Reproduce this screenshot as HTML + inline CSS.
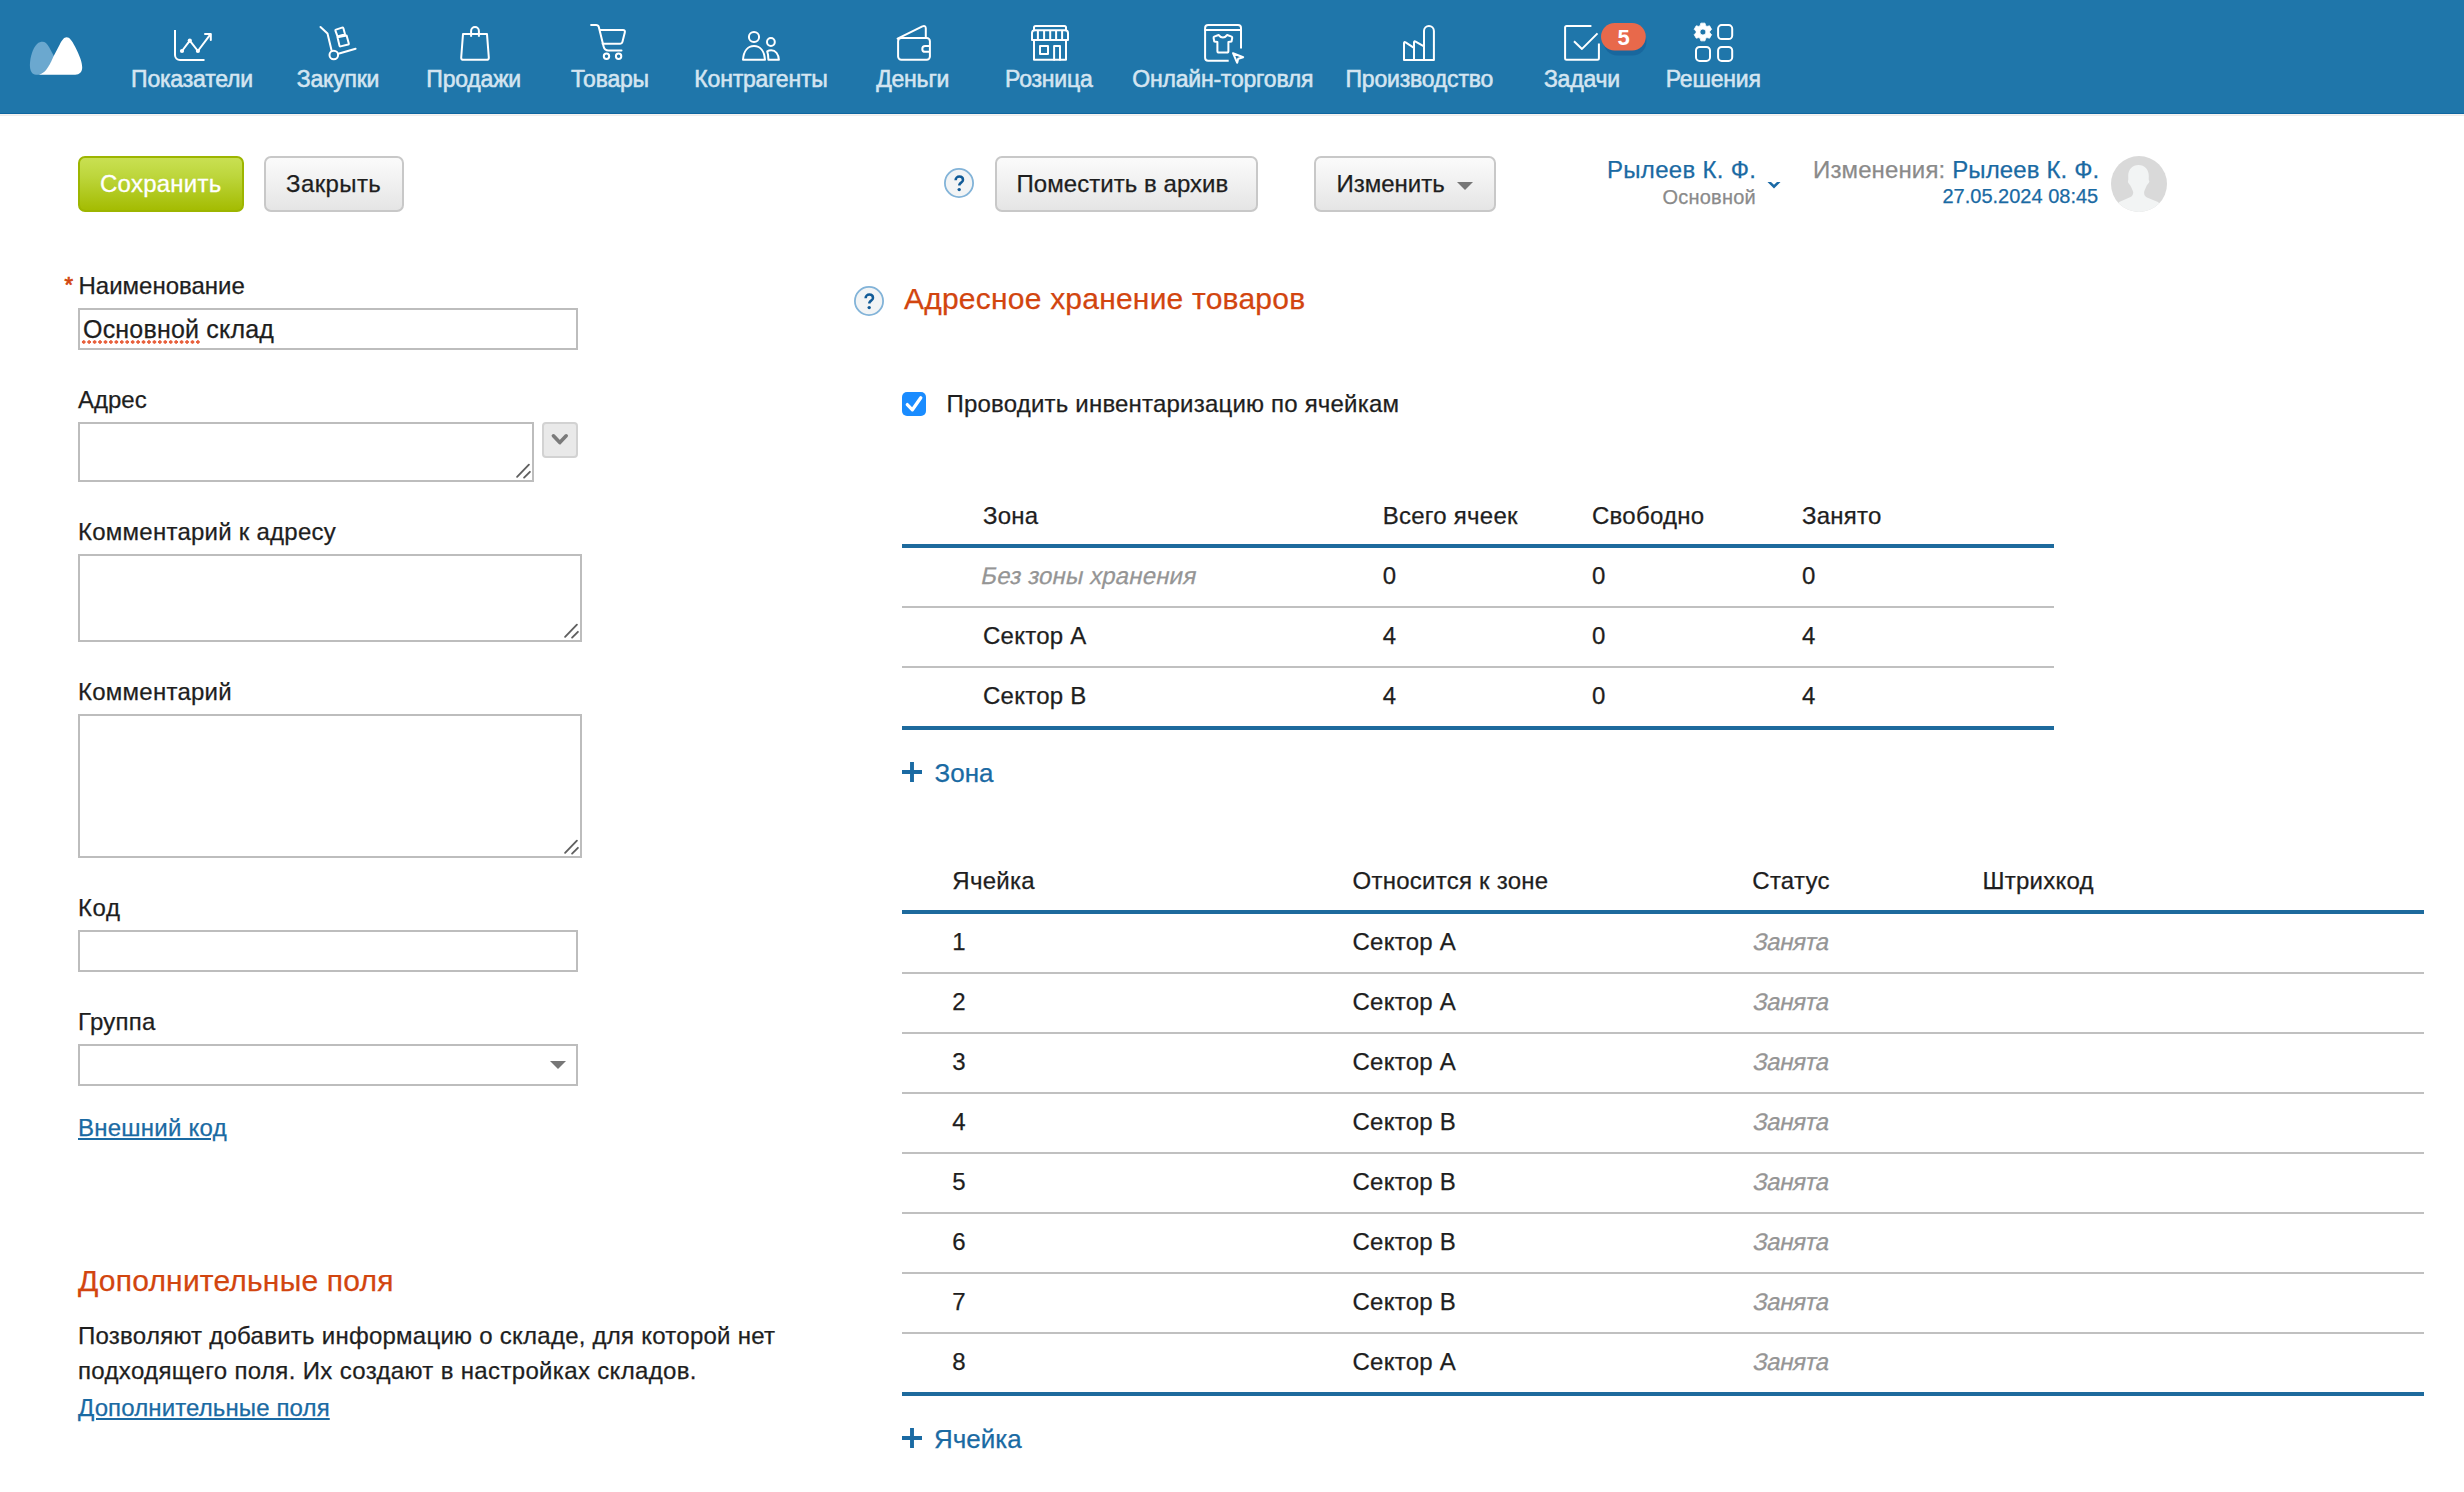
<!DOCTYPE html>
<html><head><meta charset="utf-8">
<style>
*{box-sizing:border-box;margin:0;padding:0}
html,body{width:2464px;height:1492px;overflow:hidden;background:#fff}
body{font-family:"Liberation Sans",sans-serif;color:#1e1e1e;position:relative}
.t{position:absolute;white-space:nowrap;line-height:1;-webkit-text-stroke:0.25px currentColor}
.hdr{position:absolute;left:0;top:0;width:2464px;height:114px;background:#1f76aa;border-bottom:1px solid #0e66a0}
.hdrsh{position:absolute;left:0;top:114px;width:2464px;height:1px;background:#f7f3f0}
.hdrsh2{position:absolute;left:0;top:115px;width:2464px;height:1px;background:#ededed}
.nav{position:absolute;font-size:23px;letter-spacing:-0.2px;color:#d4e5f1;text-align:center;width:240px;line-height:1;white-space:nowrap;-webkit-text-stroke:0.55px #d4e5f1}
.ico{position:absolute;top:0;left:0}
.btn{position:absolute;top:156px;height:56px;border:2px solid #c8c8c8;border-radius:7px;background:linear-gradient(#fbfbfb,#e5e5e5)}
.inp{position:absolute;border:2px solid #bdbdbd;background:#fff}
.grip{position:absolute;right:0;bottom:0;width:20px;height:20px}
.row{position:absolute;height:2px;background:#c0c0c0}
.blue{position:absolute;height:4px;background:#1d6a9d}
.gray{color:#959595;display:inline-block;transform:skewX(-12deg);transform-origin:0 20.3px;-webkit-text-stroke:0.25px #959595}
</style></head><body>
<div class="hdr"></div><div class="hdrsh"></div><div class="hdrsh2"></div>
<svg class="ico" width="120" height="114" viewBox="0 0 120 114">
  <path d="M36 74.7 C32 74.7 29.9 71 29.9 65 C29.9 57 33 48 37 44 C39 42 40.8 41.7 42.5 41.7 C45 41.7 47 43.5 49 47 L54 56.2 C48.5 68.5 44 73.5 38.8 74.7 Z" fill="#6ba8cf"/>
  <path d="M38.8 74.7 C44 73.5 48 69 53.2 57 L60 44 C62 40 64 37.2 66.6 37.2 C69.5 37.2 72 40.5 75 46.5 C79.5 55.5 82.2 62 82.2 67.5 C82.2 72 79.5 74.7 75.2 74.7 Z" fill="#fff"/>
</svg>
<div class="nav" style="left:72.0px;top:68.13px">Показатели</div>
<div class="nav" style="left:218.0px;top:68.13px">Закупки</div>
<div class="nav" style="left:353.7px;top:68.13px">Продажи</div>
<div class="nav" style="left:490.0px;top:68.13px">Товары</div>
<div class="nav" style="left:641.0px;top:68.13px">Контрагенты</div>
<div class="nav" style="left:792.7px;top:68.13px">Деньги</div>
<div class="nav" style="left:928.8px;top:68.13px">Розница</div>
<div class="nav" style="left:1102.8px;top:68.13px">Онлайн-торговля</div>
<div class="nav" style="left:1299.3px;top:68.13px">Производство</div>
<div class="nav" style="left:1461.9px;top:68.13px">Задачи</div>
<div class="nav" style="left:1593.2px;top:68.13px">Решения</div>
<!-- ICONS -->
<svg class="ico" width="2464" height="114" viewBox="0 0 2464 114" fill="none" stroke="#fff" stroke-width="2" stroke-linecap="round" stroke-linejoin="round">
 <!-- chart -->
 <path d="M175 30 V55 A5 5 0 0 0 180 60 H204.5" stroke-linecap="butt"/>
 <path d="M182 51 L189.8 40.6 L197.9 51 L210.2 34.6"/>
 <path d="M205 34 H210.8 V40"/>
 <g fill="#fff" stroke="none"><circle cx="182" cy="51" r="2.1"/><circle cx="189.8" cy="40.6" r="2.1"/><circle cx="197.9" cy="51" r="2.1"/></g>
 <!-- trolley -->
 <path d="M320.5 27 L327.5 33.5 L331.6 50.5"/>
 <circle cx="333.8" cy="55" r="4.3"/>
 <path d="M338.3 53.8 L355.6 48.8"/>
 <path d="M336 29.6 L342 27.6 Q343 27.3 343.4 28.3 L345 34.2 L337.5 36.4 L335.4 30.6 Q335.2 29.9 336 29.6 Z"/>
 <path d="M337.5 37.3 L346.6 35.5 L348.8 43.5 Q349 44.3 348.2 44.5 L340.5 46.4 Q339.7 46.6 339.5 45.8 Z"/>
 <!-- bag -->
 <path d="M463 34.1 H487 L488.8 57.5 Q489 59.8 486.6 59.8 H463.4 Q461 59.8 461.2 57.5 Z"/>
 <path d="M471.1 36.7 V30.9 A3.9 3.9 0 0 1 478.9 30.9 V36.7" stroke-linecap="butt"/>
 <!-- cart -->
 <path d="M591.1 24.9 H596 Q598.3 24.9 598.8 27 L603.6 46.5 Q604.6 50.5 608.5 50.5 H621.5"/>
 <path d="M600 30.1 H623 Q625.4 30.1 624.8 32.5 L622.4 42 Q622 43.7 620.2 43.7 H602.6"/>
 <circle cx="606.5" cy="56.3" r="2.7"/><circle cx="618.6" cy="56.3" r="2.7"/>
 <!-- people -->
 <circle cx="754" cy="37" r="5.1"/>
 <path d="M743 59.8 C743.6 51 748 46.1 754 46.1 C760 46.1 764.4 51 765 59.8 Z"/>
 <circle cx="770.9" cy="42" r="3.9"/>
 <path d="M767.2 51.3 C768.5 50.5 769.8 50.2 771.2 50.2 C775.5 50.2 778.4 54 778.9 59.8 H768.4 C768.4 56.5 768 53.5 767.2 51.3 Z"/>
 <!-- wallet -->
 <rect x="898.1" y="38.1" width="31.8" height="21.7" rx="3.2"/>
 <path d="M897.6 38.6 L922.4 26.4 Q925.8 25 925.8 28.6 V37.8"/>
 <path d="M930 46 H925.2 A2.9 2.9 0 0 0 925.2 51.8 H930" stroke-linecap="butt"/>
 <!-- store -->
 <path d="M1034 30.2 V27.6 Q1034 26 1035.6 26 H1064.4 Q1066 26 1066 27.6 V30.2"/>
 <path d="M1032 39.9 V33 Q1032 30.2 1034.8 30.2 H1065.2 Q1068 30.2 1068 33 V39.9 Z"/>
 <path d="M1037.9 30.2 V39.9 M1044.1 30.2 V39.9 M1050.2 30.2 V39.9 M1056.1 30.2 V39.9 M1062.1 30.2 V39.9" stroke-linecap="butt"/>
 <path d="M1034 39.9 V59.8 H1066 V39.9"/>
 <rect x="1040" y="46" width="8" height="8"/>
 <path d="M1054.1 59.8 V46 H1060 V59.8"/>
 <!-- online -->
 <path d="M1241 48.6 V28.1 Q1241 25.1 1238 25.1 H1208.1 Q1205.1 25.1 1205.1 28.1 V57.8 Q1205.1 60.8 1208.1 60.8 H1228.7" stroke-linecap="butt"/>
 <path d="M1205.1 30 H1241"/>
 <path d="M1218.6 35 Q1222.9 40.2 1227.2 35 L1231.6 36.6 Q1232.4 37 1232.2 38 L1231.5 41.6 L1228.4 42 V51 Q1228.4 52.6 1226.8 52.6 H1219 Q1217.4 52.6 1217.4 51 V42 L1214.3 41.6 L1213.6 38 Q1213.4 37 1214.2 36.6 Z"/>
 <path d="M1233 53.2 L1243.2 57.2 L1238.2 58.8 L1237.2 62.8 Z"/>
 <!-- factory -->
 <path d="M1404 59.9 V43.2 Q1404 41.4 1405.6 42.4 L1414 47.8 V42.4 Q1414 40.8 1415.6 41.6 L1424 46.4 V31 A4.95 4.95 0 0 1 1433.9 31 V59.9 Z M1414 47.8 V59.9 M1424 46.4 V59.9"/>
 <!-- tasks -->
 <path d="M1591.4 26.1 H1566.6 Q1565.1 26.1 1565.1 27.6 V58.3 Q1565.1 59.8 1566.6 59.8 H1597.4 Q1598.9 59.8 1598.9 58.3 V43.6" stroke-linecap="butt"/>
 <path d="M1574 41.3 L1582 48.9 L1597.5 33.4" stroke-linecap="butt"/>
 <!-- solutions -->
 <rect x="1718.1" y="25.1" width="14.1" height="13.9" rx="3.6"/>
 <rect x="1696" y="47" width="14" height="13.9" rx="3.6"/>
 <rect x="1718.1" y="47" width="14.1" height="13.9" rx="3.6"/>
</svg>
<svg class="ico" width="2464" height="114" viewBox="0 0 2464 114">
 <g transform="translate(1702.9 32)" fill="#fff">
  <path fill-rule="evenodd" stroke="#fff" stroke-width="0.8" stroke-linejoin="round" d="M-2.81 -6.30 L-2.05 -8.87 L2.05 -8.87 L2.81 -6.30 L4.06 -5.58 L6.66 -6.21 L8.70 -2.66 L6.86 -0.72 L6.86 0.72 L8.70 2.66 L6.66 6.21 L4.06 5.58 L2.81 6.30 L2.05 8.87 L-2.05 8.87 L-2.81 6.30 L-4.06 5.58 L-6.66 6.21 L-8.70 2.66 L-6.86 0.72 L-6.86 -0.72 L-8.70 -2.66 L-6.66 -6.21 L-4.06 -5.58 Z M3 0 A3 3 0 1 0 -3 0 A3 3 0 1 0 3 0 Z"/>
 </g>
 <rect x="1603.5" y="27.5" width="43" height="28" rx="14" fill="#17639a" opacity="0.75"/>
 <rect x="1601" y="23.1" width="44.8" height="27.4" rx="13.7" fill="#e8694b"/>
 <text x="1623.5" y="45.2" font-family="Liberation Sans" font-weight="bold" font-size="22" fill="#fff" text-anchor="middle">5</text>
</svg>

<div class="btn" style="left:78px;width:166px;border-color:#9db500;background:linear-gradient(#c9e052 0%,#bdd63c 35%,#a4bc02 100%)"></div>
<div class="t" style="left:100px;top:171.88px;font-size:24px;letter-spacing:0.25px;color:#fff;-webkit-text-stroke:0.3px #fff">Сохранить</div>
<div class="btn" style="left:264px;width:140px"></div>
<div class="t" style="left:286px;top:171.88px;font-size:24px;letter-spacing:0.40px;">Закрыть</div>
<svg class="ico" style="left:944px;top:168px" width="30" height="30" viewBox="0 0 30 30"><circle cx="15" cy="15" r="14.1" fill="#f2f4f5" stroke="#82b3d8" stroke-width="1.8"/><path d="M11.6 12.3 C11.6 10 13.3 8.6 15.3 8.6 C17.4 8.6 19 10 19 12 C19 14 16.2 14.6 15.4 16.6 V17.4" fill="none" stroke="#115b97" stroke-width="2.5"/><circle cx="15.2" cy="21.6" r="1.7" fill="#115b97"/></svg>
<div class="btn" style="left:995px;width:263px"></div>
<div class="t" style="left:1016.5px;top:171.88px;font-size:24px;letter-spacing:0.05px;">Поместить в архив</div>
<div class="btn" style="left:1314px;width:182px"></div>
<div class="t" style="left:1336.5px;top:171.88px;font-size:24px;letter-spacing:0.00px;">Изменить</div>
<svg class="ico" style="left:1456px;top:181px" width="18" height="10" viewBox="0 0 18 10"><path d="M1 1 H17 L9 9 Z" fill="#777"/></svg>
<div class="t" style="left:1607px;top:157.68px;font-size:24px;letter-spacing:0.30px;color:#1a6aa3">Рылеев К. Ф.</div>
<div class="t" style="left:1662.5px;top:187.07px;font-size:20px;letter-spacing:0.21px;color:#8a8a8a">Основной</div>
<svg class="ico" width="2464" height="300" viewBox="0 0 2464 300"><path d="M1767.5 182 L1771 182 L1774 184.8 L1777 182 L1780.5 182 L1774 188.5 Z" fill="#1b6aa6"/></svg>
<div class="t" style="left:1813px;top:157.68px;font-size:24px;letter-spacing:0.13px;color:#8a8a8a">Изменения: <span style="color:#1a6aa3;-webkit-text-stroke-color:#1a6aa3">Рылеев К. Ф.</span></div>
<div class="t" style="left:1942.5px;top:186.27px;font-size:20px;letter-spacing:0.00px;color:#1a6aa3">27.05.2024 08:45</div>
<svg class="ico" style="left:2111px;top:156px" width="56" height="56" viewBox="0 0 56 56"><defs><clipPath id="av"><circle cx="28" cy="28" r="28"/></clipPath></defs><circle cx="28" cy="28" r="28" fill="#d9d9d9"/><g clip-path="url(#av)" fill="#f2f4f4"><path d="M27.5 9.1 C33.5 9.1 37.8 13.5 37.8 20 C37.8 22 37.5 24 38.4 25.3 C38 27 37 28 36 29 C35 31.5 33.5 34 33.1 36 C33 39 33.8 40.3 36 41.5 L47 46.1 L56 56 H0 L8.2 46.1 L19.5 41 C21.5 40 22.2 38.5 22.2 36 C21.5 33.5 20 31 19 29 C18 28 17 27 16.9 25.3 C17.5 24 17.2 22 17.2 20 C17.2 13.5 21.5 9.1 27.5 9.1 Z"/></g></svg>
<div class="t" style="left:64.5px;top:274.18px;font-size:22px;letter-spacing:0.00px;color:#d2450f;-webkit-text-stroke:0.7px #d2450f">*</div>
<div class="t" style="left:78.5px;top:273.78px;font-size:24px;letter-spacing:0.00px;">Наименование</div>
<div class="inp" style="left:78px;top:308px;width:500px;height:42px"></div>
<div class="t" style="left:83px;top:316.84px;font-size:25px;letter-spacing:0.20px;">Основной склад</div>
<div style="position:absolute;left:81px;top:339.8px;width:119px;height:4px;background-image:radial-gradient(circle,#e8603c 1.5px,transparent 1.9px);background-size:5.45px 4px;background-repeat:repeat-x"></div>
<div class="t" style="left:78px;top:387.88px;font-size:24px;letter-spacing:0.00px;">Адрес</div>
<div class="inp" style="left:78px;top:422px;width:456px;height:60px"><svg class="grip" viewBox="0 0 20 20"><path d="M16.9 4.7 L5.1 16.8 M17.9 11.8 L12.1 17.6" stroke="#606060" stroke-width="1.9" stroke-linecap="round"/></svg></div>
<div style="position:absolute;left:542px;top:422px;width:36px;height:36px;border:2px solid #d2d2d2;border-radius:4px;background:#e9e9e9"><svg style="position:absolute;left:-2px;top:-2px" width="36" height="36" viewBox="0 0 36 36"><path d="M11.4 13.8 L17.8 20.6 L24.2 13.8" fill="none" stroke="#7a7a7a" stroke-width="3.6" stroke-linecap="round" stroke-linejoin="round"/></svg></div>
<div class="t" style="left:78px;top:519.58px;font-size:24px;letter-spacing:0.25px;">Комментарий к адресу</div>
<div class="inp" style="left:78px;top:554px;width:504px;height:88px"><svg class="grip" viewBox="0 0 20 20"><path d="M16.9 4.7 L5.1 16.8 M17.9 11.8 L12.1 17.6" stroke="#606060" stroke-width="1.9" stroke-linecap="round"/></svg></div>
<div class="t" style="left:78px;top:679.88px;font-size:24px;letter-spacing:0.25px;">Комментарий</div>
<div class="inp" style="left:78px;top:714px;width:504px;height:144px"><svg class="grip" viewBox="0 0 20 20"><path d="M16.9 4.7 L5.1 16.8 M17.9 11.8 L12.1 17.6" stroke="#606060" stroke-width="1.9" stroke-linecap="round"/></svg></div>
<div class="t" style="left:78px;top:896.28px;font-size:24px;letter-spacing:0.60px;">Код</div>
<div class="inp" style="left:78px;top:930px;width:500px;height:42px"></div>
<div class="t" style="left:78px;top:1009.88px;font-size:24px;letter-spacing:0.25px;">Группа</div>
<div class="inp" style="left:78px;top:1044px;width:500px;height:42px"><svg style="position:absolute;left:468.5px;top:14px" width="18" height="10" viewBox="0 0 18 10"><path d="M1 1 H17 L9 9 Z" fill="#777"/></svg></div>
<div class="t" style="left:78px;top:1116.28px;font-size:24px;letter-spacing:0.25px;color:#1a6aa3"><u>Внешний код</u></div>
<div class="t" style="left:78px;top:1266.31px;font-size:30px;letter-spacing:0.20px;color:#d2450f">Дополнительные поля</div>
<div class="t" style="left:78px;top:1323.58px;font-size:24px;letter-spacing:0.25px;">Позволяют добавить информацию о складе, для которой нет</div>
<div class="t" style="left:78px;top:1359.38px;font-size:24px;letter-spacing:0.34px;">подходящего поля. Их создают в настройках складов.</div>
<div class="t" style="left:78px;top:1395.68px;font-size:24px;letter-spacing:0.12px;color:#1a6aa3"><u>Дополнительные поля</u></div>
<svg class="ico" style="left:853.5px;top:285.6px" width="30" height="30" viewBox="0 0 30 30"><circle cx="15" cy="15" r="14.1" fill="#f2f4f5" stroke="#82b3d8" stroke-width="1.8"/><path d="M11.6 12.3 C11.6 10 13.3 8.6 15.3 8.6 C17.4 8.6 19 10 19 12 C19 14 16.2 14.6 15.4 16.6 V17.4" fill="none" stroke="#115b97" stroke-width="2.5"/><circle cx="15.2" cy="21.6" r="1.7" fill="#115b97"/></svg>
<div class="t" style="left:904px;top:284.11px;font-size:30px;letter-spacing:0.22px;color:#d2450f">Адресное хранение товаров</div>
<div style="position:absolute;left:902px;top:392px;width:24px;height:24px;border-radius:5px;background:#1a8cff"><svg style="position:absolute;left:0;top:0" width="24" height="24" viewBox="0 0 24 24"><path d="M5.3 12.6 L10.4 17.8 L18.8 5.8" fill="none" stroke="#fff" stroke-width="3.3" stroke-linecap="round" stroke-linejoin="round"/></svg></div>
<div class="t" style="left:946.5px;top:391.88px;font-size:24px;letter-spacing:0.20px;">Проводить инвентаризацию по ячейкам</div>
<div class="t" style="left:983px;top:503.98px;font-size:24px;letter-spacing:0.25px;">Зона</div>
<div class="t" style="left:1382.7px;top:503.98px;font-size:24px;letter-spacing:0.25px;">Всего ячеек</div>
<div class="t" style="left:1592px;top:503.98px;font-size:24px;letter-spacing:0.25px;">Свободно</div>
<div class="t" style="left:1802px;top:503.98px;font-size:24px;letter-spacing:0.25px;">Занято</div>
<div class="blue" style="left:902px;top:544px;width:1152px"></div>
<div class="t" style="left:983px;top:564.28px;font-size:24px;letter-spacing:0.25px;"><span class="gray" style="letter-spacing:0.15px;margin-left:-3px">Без зоны хранения</span></div>
<div class="t" style="left:1382.7px;top:564.28px;font-size:24px;letter-spacing:0.25px;">0</div>
<div class="t" style="left:1592px;top:564.28px;font-size:24px;letter-spacing:0.25px;">0</div>
<div class="t" style="left:1802px;top:564.28px;font-size:24px;letter-spacing:0.25px;">0</div>
<div class="row" style="left:902px;top:606px;width:1152px"></div>
<div class="t" style="left:983px;top:624.28px;font-size:24px;letter-spacing:0.25px;">Сектор А</div>
<div class="t" style="left:1382.7px;top:624.28px;font-size:24px;letter-spacing:0.25px;">4</div>
<div class="t" style="left:1592px;top:624.28px;font-size:24px;letter-spacing:0.25px;">0</div>
<div class="t" style="left:1802px;top:624.28px;font-size:24px;letter-spacing:0.25px;">4</div>
<div class="row" style="left:902px;top:666px;width:1152px"></div>
<div class="t" style="left:983px;top:684.28px;font-size:24px;letter-spacing:0.25px;">Сектор В</div>
<div class="t" style="left:1382.7px;top:684.28px;font-size:24px;letter-spacing:0.25px;">4</div>
<div class="t" style="left:1592px;top:684.28px;font-size:24px;letter-spacing:0.25px;">0</div>
<div class="t" style="left:1802px;top:684.28px;font-size:24px;letter-spacing:0.25px;">4</div>
<div class="blue" style="left:902px;top:726px;width:1152px"></div>
<svg class="ico" style="left:902px;top:762px" width="20" height="20" viewBox="0 0 20 20"><path d="M10 0 V20 M0 10 H20" stroke="#1a6aa3" stroke-width="3.9"/></svg>
<div class="t" style="left:934.5px;top:759.99px;font-size:26px;letter-spacing:0.00px;color:#1a6aa3">Зона</div>
<div class="t" style="left:952.3px;top:868.58px;font-size:24px;letter-spacing:0.25px;">Ячейка</div>
<div class="t" style="left:1352.5px;top:868.58px;font-size:24px;letter-spacing:0.25px;">Относится к зоне</div>
<div class="t" style="left:1752.3px;top:868.58px;font-size:24px;letter-spacing:0.25px;">Статус</div>
<div class="t" style="left:1982.5px;top:868.58px;font-size:24px;letter-spacing:0.25px;">Штрихкод</div>
<div class="blue" style="left:902px;top:910px;width:1522px"></div>
<div class="t" style="left:952.3px;top:930.18px;font-size:24px;letter-spacing:0.25px;">1</div>
<div class="t" style="left:1352.5px;top:930.18px;font-size:24px;letter-spacing:0.25px;">Сектор А</div>
<div class="t" style="left:1752.3px;top:930.18px;font-size:24px;letter-spacing:0.25px;"><span class="gray" style="letter-spacing:-0.5px">Занята</span></div>
<div class="row" style="left:902px;top:972px;width:1522px"></div>
<div class="t" style="left:952.3px;top:990.18px;font-size:24px;letter-spacing:0.25px;">2</div>
<div class="t" style="left:1352.5px;top:990.18px;font-size:24px;letter-spacing:0.25px;">Сектор А</div>
<div class="t" style="left:1752.3px;top:990.18px;font-size:24px;letter-spacing:0.25px;"><span class="gray" style="letter-spacing:-0.5px">Занята</span></div>
<div class="row" style="left:902px;top:1032px;width:1522px"></div>
<div class="t" style="left:952.3px;top:1050.18px;font-size:24px;letter-spacing:0.25px;">3</div>
<div class="t" style="left:1352.5px;top:1050.18px;font-size:24px;letter-spacing:0.25px;">Сектор А</div>
<div class="t" style="left:1752.3px;top:1050.18px;font-size:24px;letter-spacing:0.25px;"><span class="gray" style="letter-spacing:-0.5px">Занята</span></div>
<div class="row" style="left:902px;top:1092px;width:1522px"></div>
<div class="t" style="left:952.3px;top:1110.18px;font-size:24px;letter-spacing:0.25px;">4</div>
<div class="t" style="left:1352.5px;top:1110.18px;font-size:24px;letter-spacing:0.25px;">Сектор В</div>
<div class="t" style="left:1752.3px;top:1110.18px;font-size:24px;letter-spacing:0.25px;"><span class="gray" style="letter-spacing:-0.5px">Занята</span></div>
<div class="row" style="left:902px;top:1152px;width:1522px"></div>
<div class="t" style="left:952.3px;top:1170.18px;font-size:24px;letter-spacing:0.25px;">5</div>
<div class="t" style="left:1352.5px;top:1170.18px;font-size:24px;letter-spacing:0.25px;">Сектор В</div>
<div class="t" style="left:1752.3px;top:1170.18px;font-size:24px;letter-spacing:0.25px;"><span class="gray" style="letter-spacing:-0.5px">Занята</span></div>
<div class="row" style="left:902px;top:1212px;width:1522px"></div>
<div class="t" style="left:952.3px;top:1230.18px;font-size:24px;letter-spacing:0.25px;">6</div>
<div class="t" style="left:1352.5px;top:1230.18px;font-size:24px;letter-spacing:0.25px;">Сектор В</div>
<div class="t" style="left:1752.3px;top:1230.18px;font-size:24px;letter-spacing:0.25px;"><span class="gray" style="letter-spacing:-0.5px">Занята</span></div>
<div class="row" style="left:902px;top:1272px;width:1522px"></div>
<div class="t" style="left:952.3px;top:1290.18px;font-size:24px;letter-spacing:0.25px;">7</div>
<div class="t" style="left:1352.5px;top:1290.18px;font-size:24px;letter-spacing:0.25px;">Сектор В</div>
<div class="t" style="left:1752.3px;top:1290.18px;font-size:24px;letter-spacing:0.25px;"><span class="gray" style="letter-spacing:-0.5px">Занята</span></div>
<div class="row" style="left:902px;top:1332px;width:1522px"></div>
<div class="t" style="left:952.3px;top:1350.18px;font-size:24px;letter-spacing:0.25px;">8</div>
<div class="t" style="left:1352.5px;top:1350.18px;font-size:24px;letter-spacing:0.25px;">Сектор А</div>
<div class="t" style="left:1752.3px;top:1350.18px;font-size:24px;letter-spacing:0.25px;"><span class="gray" style="letter-spacing:-0.5px">Занята</span></div>
<div class="blue" style="left:902px;top:1392px;width:1522px"></div>
<svg class="ico" style="left:902px;top:1428px" width="20" height="20" viewBox="0 0 20 20"><path d="M10 0 V20 M0 10 H20" stroke="#1a6aa3" stroke-width="3.9"/></svg>
<div class="t" style="left:934px;top:1425.79px;font-size:26px;letter-spacing:0.00px;color:#1a6aa3">Ячейка</div>
</body></html>
